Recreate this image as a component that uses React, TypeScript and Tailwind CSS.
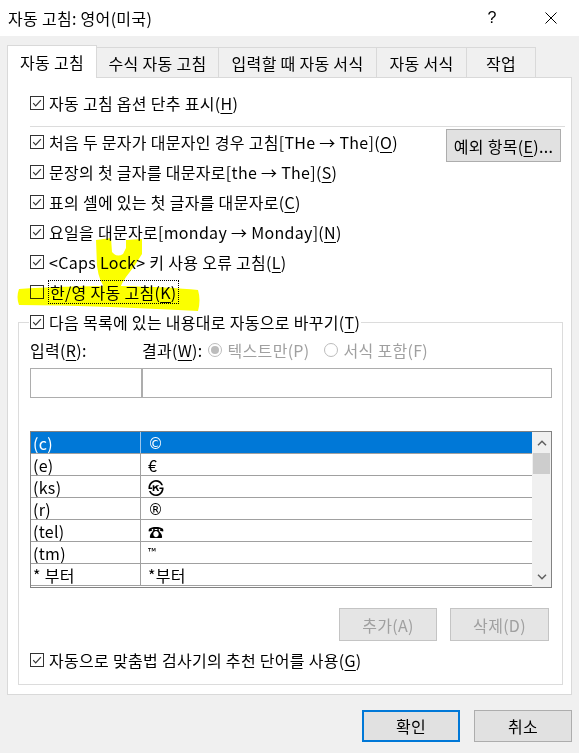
import React from "react";

const FONT = "font-['Noto_Sans_CJK_KR','Noto_Sans',sans-serif]";

function Check({ checked = true }: { checked?: boolean }) {
  return (
    <span className="w-[14px] h-[14px] shrink-0 border border-[#333333] bg-white flex items-center justify-center">
      {checked && (
        <svg width="12" height="12" viewBox="0 0 12 12">
          <path d="M2.2 6.2 L4.7 8.8 L9.9 3.1" fill="none" stroke="#333333" strokeWidth="1.2" />
        </svg>
      )}
    </span>
  );
}

function U({ c }: { c: string }) {
  return <span className="underline underline-offset-[3px]">{c}</span>;
}

function Row({ children, checked = true }: { children: React.ReactNode; checked?: boolean }) {
  return (
    <div className="h-[30px] pl-[22px] flex items-center gap-[5px]">
      <Check checked={checked} />
      <span className="whitespace-nowrap">{children}</span>
    </div>
  );
}

function Radio({ on }: { on: boolean }) {
  return (
    <span className="w-[14px] h-[14px] shrink-0 rounded-full border border-[#bcbcbc] bg-white flex items-center justify-center">
      {on && <span className="w-[8px] h-[8px] rounded-full bg-[#bcbcbc]" />}
    </span>
  );
}

const rows: [string, React.ReactNode][] = [
  ["(c)", <span className="font-['DejaVu_Sans',sans-serif] text-[15px]">©</span>],
  ["(e)", "€"],
  ["(ks)", "㉿"],
  ["(r)", <span className="font-['DejaVu_Sans',sans-serif] text-[15px]">®</span>],
  ["(tel)", "☎"],
  ["(tm)", <span className="text-[11px] relative -top-[4px]">™</span>],
  ["* 부터", "*부터"],
];

export default function App() {
  return (
    <div className={`${FONT} relative w-[579px] h-[753px] overflow-hidden bg-[#f0f0f0] text-[16px] tracking-[0.3px] text-black leading-none`}>
      {/* Title bar */}
      <div className="h-[36px] bg-white flex items-center">
        <span className="pl-[8px] whitespace-nowrap">자동 고침: 영어(미국)</span>
        <span className="ml-auto w-[46px] text-center text-[16px] font-['Liberation_Sans',sans-serif]">?</span>
        <span className="ml-[13px] w-[46px] flex justify-center">
          <svg width="12" height="12" viewBox="0 0 12 12">
            <path d="M0.5 0.5 L11.5 11.5 M11.5 0.5 L0.5 11.5" stroke="#000" strokeWidth="1" />
          </svg>
        </span>
        <span className="w-[5px]" />
      </div>

      <div className="px-[7px] pt-[9px]">
        {/* Tabs */}
        <div className="flex items-end h-[33px] -mb-px relative z-10">
          <div className="w-[90px] h-[33px] bg-white border-x border-t border-[#d9d9d9] flex items-center justify-center whitespace-nowrap">자동 고침</div>
          <div className="w-[122px] h-[30px] mb-px border-r border-t border-[#d9d9d9] flex items-center justify-center whitespace-nowrap">수식 자동 고침</div>
          <div className="w-[158px] h-[30px] mb-px border-r border-t border-[#d9d9d9] flex items-center justify-center whitespace-nowrap">입력할 때 자동 서식</div>
          <div className="w-[90px] h-[30px] mb-px border-r border-t border-[#d9d9d9] flex items-center justify-center whitespace-nowrap">자동 서식</div>
          <div className="w-[69px] h-[30px] mb-px border-r border-t border-[#d9d9d9] flex items-center justify-center whitespace-nowrap">작업</div>
        </div>

        {/* Panel */}
        <div className="h-[618px] bg-white border border-[#d9d9d9] pt-[10px]">
          <Row>
            자동 고침 옵션 단추 표시(<U c="H" />)
          </Row>
          <div className="mt-[8px] ml-[22px] mr-[6px] h-px bg-[#dcdcdc]" />
          <div className="h-[30px] pl-[22px] pr-[10px] flex items-center">
            <div className="flex items-center gap-[5px]">
              <Check />
              <span className="whitespace-nowrap">
                처음 두 문자가 대문자인 경우 고침[THe → The](<U c="O" />)
              </span>
            </div>
            <button className="ml-auto self-start mt-[2px] w-[115px] h-[33px] shrink-0 bg-[#e1e1e1] border border-[#adadad] whitespace-nowrap tracking-[0.3px]">
              예외 항목(<U c="E" />)...
            </button>
          </div>
          <Row>
            문장의 첫 글자를 대문자로[the → The](<U c="S" />)
          </Row>
          <Row>
            표의 셀에 있는 첫 글자를 대문자로(<U c="C" />)
          </Row>
          <Row>
            요일을 대문자로[monday → Monday](<U c="N" />)
          </Row>
          <Row>
            &lt;Caps Lock&gt; 키 사용 오류 고침(<U c="L" />)
          </Row>
          <div className="h-[30px] pl-[22px] flex items-center gap-[5px]">
            <Check checked={false} />
            <span className="whitespace-nowrap border border-dotted border-black px-[1px] py-[3px] -ml-[1px]">
              한/영 자동 고침(<U c="K" />)
            </span>
          </div>

          {/* Group box */}
          <fieldset className="ml-[10px] mr-[8px] border border-[#dcdcdc] pl-[11px] pr-[10px] pb-[9px]">
            <legend className="-ml-[1px] px-[1px] h-[30px] flex items-center gap-[5px]">
              <Check />
              <span className="whitespace-nowrap">
                다음 목록에 있는 내용대로 자동으로 바꾸기(<U c="T" />)
              </span>
            </legend>
            <div className="h-[26px] flex items-center">
              <span className="w-[112px] whitespace-nowrap">
                입력(<U c="R" />):
              </span>
              <span className="whitespace-nowrap">
                결과(<U c="W" />):
              </span>
              <span className="ml-[5px] flex items-center gap-[6px] text-[#a0a0a0]">
                <Radio on={true} />
                <span className="whitespace-nowrap">텍스트만(P)</span>
              </span>
              <span className="ml-[14px] flex items-center gap-[6px] text-[#a0a0a0]">
                <Radio on={false} />
                <span className="whitespace-nowrap">서식 포함(F)</span>
              </span>
            </div>
            <div className="mt-[5px] flex h-[30px]">
              <div className="w-[112px] h-full border border-[#adadad] bg-white" />
              <div className="flex-1 h-full border border-[#adadad] bg-white" />
            </div>

            {/* List */}
            <div className="mt-[33px] h-[157px] border border-[#828282] flex overflow-hidden">
              <div className="flex-1 flex flex-col">
                {rows.map(([a, b], i) => (
                  <div
                    key={i}
                    className={`h-[22px] shrink-0 flex border-b border-[#a0a0a0] ${i === 0 ? "bg-[#0078d7] text-white" : ""}`}
                  >
                    <div className={`w-[110px] shrink-0 pl-[2px] flex items-center border-r ${i === 0 ? "border-[#9cc6ec]" : "border-[#a0a0a0]"}`}>
                      <span className="whitespace-nowrap">{a}</span>
                    </div>
                    <div className="flex-1 pl-[7px] flex items-center">
                      <span className="whitespace-nowrap">{b}</span>
                    </div>
                  </div>
                ))}
              </div>
              <div className="w-[19px] shrink-0 bg-[#f0f0f0] flex flex-col">
                <div className="h-[21px] flex items-center justify-center">
                  <svg width="10" height="6" viewBox="0 0 10 6">
                    <path d="M1 5.2 L5 1.2 L9 5.2" fill="none" stroke="#606060" strokeWidth="1.5" />
                  </svg>
                </div>
                <div className="h-[21px] mx-px bg-[#cdcdcd]" />
                <div className="flex-1" />
                <div className="h-[21px] flex items-center justify-center">
                  <svg width="10" height="6" viewBox="0 0 10 6">
                    <path d="M1 0.8 L5 4.8 L9 0.8" fill="none" stroke="#606060" strokeWidth="1.5" />
                  </svg>
                </div>
              </div>
            </div>

            <div className="mt-[20px] flex justify-end gap-[13px] pr-[3px]">
              <button className="w-[98px] h-[33px] bg-[#e5e5e5] border border-[#c4c4c4] text-[#a0a0a0] whitespace-nowrap tracking-[0.3px]">추가(A)</button>
              <button className="w-[99px] h-[33px] bg-[#e5e5e5] border border-[#c4c4c4] text-[#a0a0a0] whitespace-nowrap tracking-[0.3px]">삭제(D)</button>
            </div>
            <div className="mt-[4px] h-[30px] flex items-center gap-[5px]">
              <Check />
              <span className="whitespace-nowrap">
                자동으로 맞춤법 검사기의 추천 단어를 사용(<U c="G" />)
              </span>
            </div>
          </fieldset>
        </div>
      </div>

      {/* Bottom buttons */}
      <div className="mt-[15px] flex justify-end gap-[14px] pr-[7px]">
        <button className="w-[98px] h-[32px] bg-[#e1e1e1] border-2 border-[#0078d7] tracking-[0.3px]">확인</button>
        <button className="w-[98px] h-[32px] bg-[#e1e1e1] border border-[#adadad] tracking-[0.3px]">취소</button>
      </div>

      {/* Yellow highlighter marks */}
      <svg
        className="absolute left-0 top-0 pointer-events-none mix-blend-multiply"
        width="579"
        height="753"
        viewBox="0 0 579 753"
      >
        <path
          d="M96 240 L111 238 L112 252 Q117 258 123 254 L126 248 L126 240 L142 239 L142 254 Q135 266 126 277 Q121 284 119 291 L107 291 Q99 282 97 266 Z"
          fill="#fbff00"
        />
        <path
          d="M19 289 Q60 286 120 286 Q170 287 198 290 Q201 300 198 311 Q160 309 110 307 Q60 305 19 305 Q16 297 19 289 Z"
          fill="#fbff00"
        />
      </svg>
    </div>
  );
}
